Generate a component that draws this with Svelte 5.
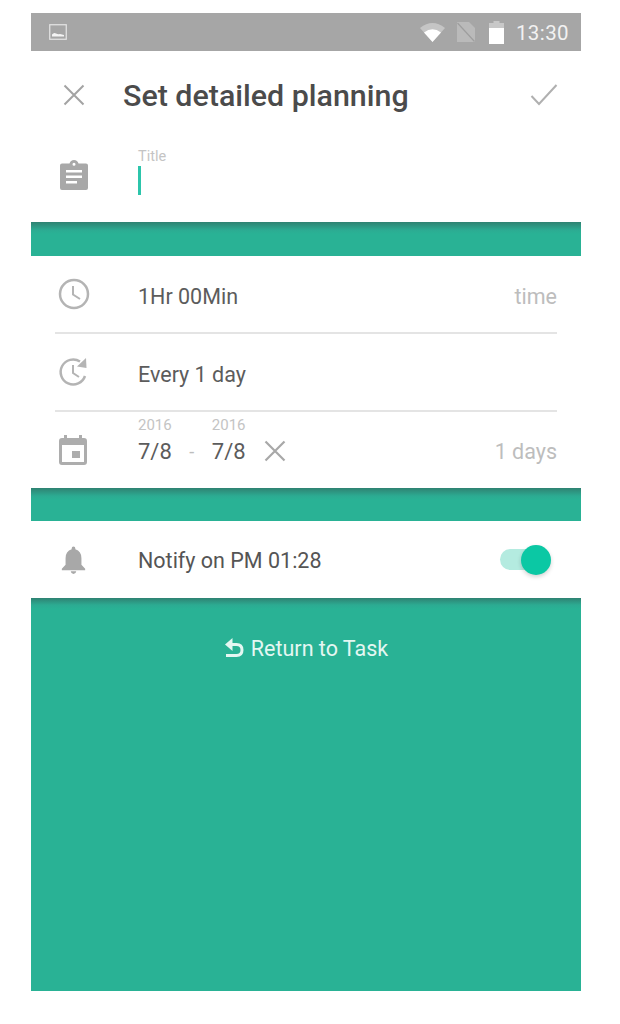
<script>
  const rows = [
    { id: 'time', text: '1Hr 00Min', right: 'time' },
    { id: 'repeat', text: 'Every 1 day', right: '' }
  ];
</script>

<div class="phone">
  <div class="status">
    <svg class="pic" viewBox="0 0 18 16" width="18" height="16">
      <rect x="0.75" y="0.75" width="16.5" height="14.5" fill="none" stroke="#e6e6e6" stroke-width="1.2" />
      <path d="M3 12.5 L3 10.5 Q5 8 7 9.5 Q9 10.5 11 10 L15 11 L15 12.5 Z" fill="#f4f4f4" />
    </svg>
    <span class="spacer"></span>
    <svg class="wifi" viewBox="0 0 25 20" width="25" height="20">
      <path d="M0 6 Q12.500 -4 25 6 L12.500 20 Z" fill="#fff" opacity="0.35" />
      <path d="M4 10.500 Q12.500 4 21 10.500 L12.500 20 Z" fill="#fff" />
    </svg>
    <svg class="sim" viewBox="0 0 18 20" width="18" height="20">
      <path d="M0 0 H12 L18 6 V20 H0 Z" fill="#bababa" />
      <path d="M0.500 1 L17.500 19.500" stroke="#9e9e9e" stroke-width="1.200" />
    </svg>
    <svg class="batt" viewBox="0 0 15 23" width="15" height="23">
      <path d="M4.500 0 H10.500 V2 H15 V8 H0 V2 H4.500 Z" fill="#c8c8c8" />
      <rect x="0" y="7" width="15" height="16" fill="#fff" />
    </svg>
    <span class="clock">13:30</span>
  </div>

  <header>
    <svg class="ico" viewBox="0 0 24 24" width="24" height="24">
      <path d="M2.500 2.500 L21.500 21.500 M21.500 2.500 L2.500 21.500" stroke="#a3a3a3" stroke-width="2" fill="none" />
    </svg>
    <h1>Set detailed planning</h1>
    <svg class="check" viewBox="0 0 28 24" width="28" height="24">
      <path d="M1.500 13 L9 21 L26.500 2" stroke="#b0b0b0" stroke-width="2" fill="none" />
    </svg>
  </header>

  <div class="title-row">
    <svg class="ico" viewBox="0 0 28 30" width="28" height="30">
      <path fill="#a8a8a8" fill-rule="evenodd" d="M2 3.500 H9.500 Q10.500 0 14 0 Q17.500 0 18.500 3.500 H26 Q28 3.500 28 5.500 V28 Q28 30 26 30 H2 Q0 30 0 28 V5.500 Q0 3.500 2 3.500 Z M14 2.700 A1.500 1.500 0 1 0 14 5.700 A1.500 1.500 0 1 0 14 2.700 Z M6 10 V12.500 H22 V10 Z M6 15.500 V18 H22 V15.500 Z M6 21 V23.500 H17 V21 Z" />
    </svg>
    <div class="field">
      <span class="small">Title</span>
      <span class="caret"></span>
    </div>
  </div>

  <div class="band"></div>

  {#each rows as row}
    <div class="row">
      {#if row.id === 'time'}
        <svg class="ico" viewBox="0 0 32 32" width="32" height="32">
          <circle cx="16" cy="16" r="14" fill="none" stroke="#b4b4b4" stroke-width="2.500" />
          <path d="M15 8 V16.500 L22 21" fill="none" stroke="#b4b4b4" stroke-width="2" />
        </svg>
      {:else}
        <svg class="ico" viewBox="0 0 32 32" width="32" height="32">
          <path d="M27 20 A12.500 12.500 0 1 1 22 5.500" fill="none" stroke="#b4b4b4" stroke-width="2.500" />
          <path d="M19 10.500 L28.500 12 L28 2 Z" fill="#b4b4b4" />
          <path d="M15 9 V17 L21 21" fill="none" stroke="#b4b4b4" stroke-width="2" />
        </svg>
      {/if}
      <span class="label">{row.text}</span>
      <span class="right">{row.right}</span>
    </div>
  {/each}

  <div class="row last">
    <svg class="ico" viewBox="0 0 28 30" width="28" height="30">
      <path fill="#adadad" fill-rule="evenodd" d="M5 0 H8 V3 H20 V0 H23 V3 H25 Q28 3 28 6 V27 Q28 30 25 30 H3 Q0 30 0 27 V6 Q0 3 3 3 H5 Z M3 10 V27 H25 V10 Z M13 16 H21 V23 H13 Z" />
    </svg>
    <div class="dates">
      <div class="date">
        <span class="small year">2016</span>
        <span class="day">7/8</span>
      </div>
      <span class="dash">-</span>
      <div class="date">
        <span class="small year">2016</span>
        <span class="day">7/8</span>
      </div>
      <svg class="clear" viewBox="0 0 22 22" width="22" height="22">
        <path d="M1.500 1.500 L20.500 20.500 M20.500 1.500 L1.500 20.500" stroke="#a8a8a8" stroke-width="2.200" fill="none" />
      </svg>
    </div>
    <span class="right">1 days</span>
  </div>

  <div class="band short"></div>

  <div class="row notify">
    <svg class="ico" viewBox="0 0 26 30" width="25" height="28">
      <path fill="#a8a8a8" d="M11 3 Q11 0.500 13 0.500 Q15 0.500 15 3 V3.500 Q21.500 5.500 21.500 13 V20 L25.500 24.500 V26 H0.500 V24.500 L4.500 20 V13 Q4.500 5.500 11 3.500 Z M10 27 H16 Q15.500 30 13 30 Q10.500 30 10 27 Z" />
    </svg>
    <span class="label">Notify on PM 01:28</span>
    <span class="toggle"><span class="knob"></span></span>
  </div>

  <div class="bottom">
    <div class="back">
      <svg viewBox="0 0 20 20" width="20" height="20">
        <path d="M4.500 6.500 H12.500 Q18 6.500 18 12 Q18 17.500 12.500 17.500 H2" fill="none" stroke="#e4f7f2" stroke-width="3" />
        <path d="M8.500 0 L8.500 13 L1 6.500 Z" fill="#e4f7f2" />
      </svg>
      <span>Return to Task</span>
    </div>
  </div>
</div>

<style>
  :global(body) {
    background: #fff;
    font-family: Roboto, "Liberation Sans", sans-serif;
  }

  .phone {
    width: 550px;
    height: 978px;
    margin: 13px 0 0 31px;
    display: flex;
    flex-direction: column;
    background: #fff;
  }

  .status {
    height: 38px;
    background: #a6a6a6;
    display: flex;
    align-items: center;
    padding: 0 12px 0 18px;
    flex: none;
  }
  .spacer { flex: 1; }
  .wifi { margin-right: 12px; }
  .sim { margin-right: 14px; }
  .batt { margin-right: 12px; }
  .clock {
    color: #f2f2f2;
    font-size: 20.5px;
    letter-spacing: 0.4px;
    padding-top: 2px;
  }

  header {
    height: 88px;
    flex: none;
    display: flex;
    align-items: center;
    padding: 0 23px 0 31px;
    box-sizing: border-box;
  }
  h1 {
    margin: 0 0 0 37px;
    flex: 1;
    font-size: 30.4px;
    font-weight: 500;
    color: #4b4b4b;
  }

  .ico { flex: none; }

  .title-row {
    height: 83px;
    flex: none;
    display: flex;
    padding: 21px 0 0 29px;
    box-sizing: border-box;
  }
  .field {
    margin-left: 50px;
    margin-top: -12px;
    display: flex;
    flex-direction: column;
  }
  .small {
    color: #c4c4c4;
    font-size: 14.5px;
    line-height: 17px;
  }
  .caret {
    width: 3px;
    height: 29px;
    margin-top: 1px;
    background: #2cc5ab;
  }

  .band {
    height: 34px;
    flex: none;
    background: linear-gradient(#2f8272, #2cab92 8px, #29b295 12px);
  }
  .band.short { height: 33px; }

  .row {
    height: 76px;
    margin: 0 24px;
    flex: none;
    display: flex;
    align-items: center;
    border-bottom: 2px solid #e4e4e4;
    padding-left: 2px;
  }
  .row .ico { margin-left: 1px; }
  .row:not(.last):not(.notify) .label { margin-left: 48px; }
  .label {
    flex: 1;
    font-size: 21.5px;
    color: #5c5c5c;
    padding-top: 4px;
  }
  .right {
    font-size: 21.5px;
    color: #bdbdbd;
    padding-top: 4px;
  }

  .row.last {
    border-bottom: none;
    padding-left: 3px;
  }
  .last .right { padding-top: 2px; }
  .dates {
    flex: 1;
    margin-left: 51px;
    align-self: stretch;
    display: flex;
    align-items: flex-start;
    padding-top: 5px;
  }
  .date {
    display: flex;
    flex-direction: column;
  }
  .year {
    font-size: 15px;
    margin-bottom: 5px;
  }
  .day {
    font-size: 22px;
    line-height: 25px;
    color: #5c5c5c;
  }
  .dash {
    margin: 22px 17.5px 0;
    color: #bdbdbd;
    font-size: 18px;
    line-height: 25px;
  }
  .clear { margin: 23px 0 0 18px; }

  .row.notify {
    border-bottom: none;
    height: 77px;
    padding-left: 5px;
  }
  .notify .label { margin-left: 52px; color: #555; padding-top: 2px; }
  .toggle {
    width: 46px;
    height: 21px;
    border-radius: 11px;
    background: #b4ebe0;
    position: relative;
    margin-right: 11px;
  }
  .knob {
    position: absolute;
    right: -5px;
    top: -4.5px;
    width: 30px;
    height: 30px;
    border-radius: 50%;
    background: #0bc8a4;
    box-shadow: 0 2px 4px rgba(0, 0, 0, 0.18);
  }

  .bottom {
    flex: 1;
    background: linear-gradient(#2f8272, #2cab92 7px, #29b295 11px);
    display: flex;
    justify-content: center;
  }
  .back {
    margin-top: 37px;
    display: flex;
    align-items: center;
    height: 26px;
    gap: 7px;
    color: #e4f7f2;
    font-size: 21.5px;
  }
</style>
